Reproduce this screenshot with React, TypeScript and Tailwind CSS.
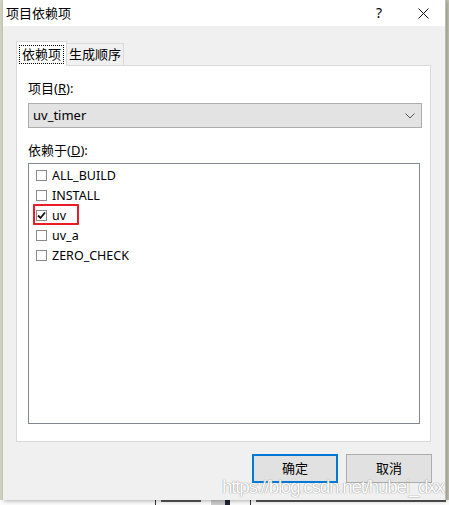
import React from 'react';

const font = "font-['Noto_Sans','Noto_Sans_CJK_SC',sans-serif]";

const items = ['ALL_BUILD', 'INSTALL', 'uv', 'uv_a', 'ZERO_CHECK'];

const CheckBox: React.FC<{ checked?: boolean }> = ({ checked }) => (
  <div className="w-[11px] h-[11px] border border-[#8a8a8a] bg-white flex items-center justify-center shrink-0">
    {checked && (
      <svg width="9" height="9" viewBox="0 0 9 9">
        <path d="M1 4.5 L3.5 7 L8 1.5" fill="none" stroke="#111" strokeWidth="1.8" />
      </svg>
    )}
  </div>
);

const App: React.FC = () => {
  return (
    <div className={`w-[449px] h-[505px] overflow-hidden flex flex-col bg-[#c9cbb8] text-[12px] text-black ${font}`}>
      <div className="flex h-[500px]">
        <div className="w-[3px] bg-[#d3d5c2]" />
        {/* dialog */}
        <div className="relative w-[443px] flex flex-col border-r border-[#bdbdbd] shadow-[1px_1px_4px_rgba(0,0,0,0.3)]">
          <div className="h-[26px] bg-white flex items-center pl-[3px] pr-[16px]">
            <span className="text-[13px] leading-none">项目依赖项</span>
            <span className="ml-auto mr-[36px] text-[14px] leading-none">?</span>
            <svg width="11" height="11" viewBox="0 0 11 11">
              <path d="M0.5 0.5 L10.5 10.5 M10.5 0.5 L0.5 10.5" stroke="#111" strokeWidth="1" />
            </svg>
          </div>

          <div className="flex-1 bg-[#f0f0f0] pt-[15px] px-[13px] flex flex-col">
            {/* tabs */}
            <div className="flex items-end h-[24px]">
              <div className="h-[25px] w-[51px] -mb-px z-10 bg-white border border-b-0 border-[#d9d9d9] flex items-center justify-center px-[2px]">
                <div className="w-full h-[19px] border border-dotted border-black flex items-center justify-center text-[13px] leading-none">
                  依赖项
                </div>
              </div>
              <div className="h-[22px] w-[57px] bg-[#f0f0f0] border border-b-0 border-l-0 border-[#d9d9d9] flex items-center justify-center text-[13px] leading-none">
                生成顺序
              </div>
            </div>

            {/* panel */}
            <div className="w-[415px] h-[377px] bg-white border border-[#d9d9d9] px-[11px] flex flex-col">
              <div className="mt-[14px] h-[16px] leading-[16px] text-[13px]">
                项目(<span className="underline">R</span>):
              </div>
              <div className="mt-[7px] h-[25px] w-[394px] bg-[#e3e3e3] border border-[#adadad] flex items-center pl-[4px] pr-[6px]">
                <span className="text-[13px]">uv_timer</span>
                <svg className="ml-auto" width="10" height="6" viewBox="0 0 10 6">
                  <path d="M0.5 0.5 L5 5 L9.5 0.5" fill="none" stroke="#555" strokeWidth="1" />
                </svg>
              </div>
              <div className="mt-[14px] h-[16px] leading-[16px] text-[13px]">
                依赖于(<span className="underline">D</span>):
              </div>
              <div className="mt-[5px] w-[392px] h-[261px] border border-[#828790] bg-white pt-[1px]">
                {items.map((item) => (
                  <div key={item} className="relative h-[20px] flex items-center pl-[7px] gap-[5px]">
                    <CheckBox checked={item === 'uv'} />
                    <span className="text-[12.5px] leading-none pt-[2px]">{item}</span>
                    {item === 'uv' && (
                      <div className="absolute left-[4px] top-[-1px] w-[46px] h-[21px] border-2 border-[#ec1c24] rounded-[1px]" />
                    )}
                  </div>
                ))}
              </div>
            </div>

            {/* buttons */}
            <div className="mt-[12px] flex justify-end gap-[8px]">
              <button className="w-[86px] h-[29px] bg-[#e1e1e1] border-2 border-[#0078d7] text-[13px]">确定</button>
              <button className="w-[86px] h-[29px] bg-[#e1e1e1] border border-[#adadad] text-[13px]">取消</button>
            </div>
          </div>

          <div className="absolute left-[219px] top-[477px] whitespace-nowrap text-[19px] tracking-[-1.3px] leading-none text-white font-['Liberation_Sans',sans-serif] [text-shadow:0_0_1px_#8f8f8f,0_0_1px_#8f8f8f] opacity-90">
            https://blog.csdn.net/hubei_dxx
          </div>
        </div>
        <div className="flex-1 bg-[#c4c6b2]" />
      </div>
      {/* what lies behind the dialog, cut at its bottom edge */}
      <div className="h-[5px] flex items-start bg-[#fbfbfb]">
        <div className="w-[155px]" />
        <div className="w-px h-full bg-[#333]" />
        <div className="ml-[5px] w-[40px] h-[2px] bg-[#555]" />
        <div className="ml-[10px] w-[14px] h-full bg-[#ccc]" />
        <div className="w-[5px] h-full bg-[#223]" />
        <div className="ml-[20px] w-px h-full bg-[#333]" />
        <div className="ml-[5px] w-[190px] h-[2px] bg-[#555]" />
      </div>
    </div>
  );
};

export default App;
